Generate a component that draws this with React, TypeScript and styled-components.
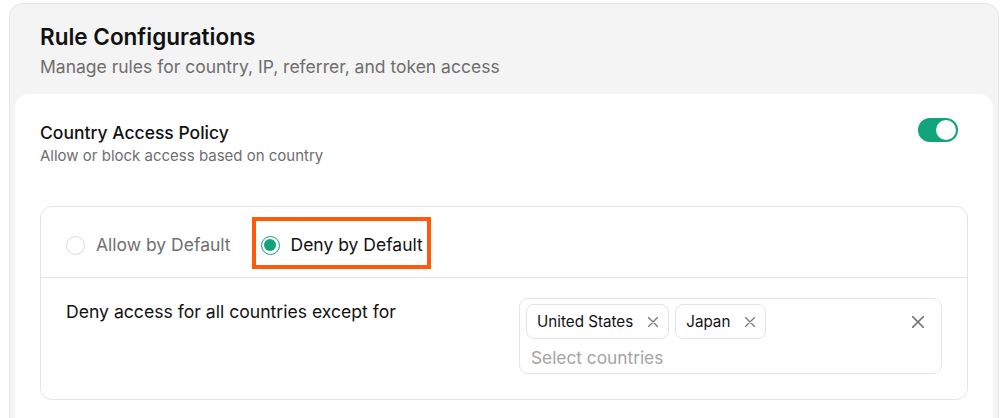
import React, { useState } from 'react';
import styled, { createGlobalStyle } from 'styled-components';

const GlobalStyle = createGlobalStyle`
  body {
    margin: 0;
    background: #ffffff;
    font-family: Inter, "Noto Sans", sans-serif;
    color: #111111;
  }
`;

type Policy = 'allow' | 'deny';

const countries = ['United States', 'Japan'];

// Pequeña X dibujada en svg
const CloseIcon: React.FC<{ size: number }> = ({ size }) => (
  <svg width={size} height={size} viewBox="0 0 10 10" fill="none">
    <path d="M0.5 0.5 L9.5 9.5 M9.5 0.5 L0.5 9.5" stroke="#777" strokeWidth="1.3" strokeLinecap="round" />
  </svg>
);

const App: React.FC = () => {
  const [enabled, setEnabled] = useState(true);
  const [policy, setPolicy] = useState<Policy>('deny');
  const [selected, setSelected] = useState<string[]>(countries);

  return (
    <Page>
      <GlobalStyle />
      <OuterCard>
        <Header>
          <Title>Rule Configurations</Title>
          <Subtitle>Manage rules for country, IP, referrer, and token access</Subtitle>
        </Header>

        <InnerCard>
          <PolicyHeader>
            <div>
              <PolicyTitle>Country Access Policy</PolicyTitle>
              <PolicyDesc>Allow or block access based on country</PolicyDesc>
            </div>
            <Toggle $on={enabled} onClick={() => setEnabled(!enabled)} aria-label="toggle">
              <Knob $on={enabled} />
            </Toggle>
          </PolicyHeader>

          <RuleBox>
            <RadioRow>
              <RadioOption $active={policy === 'allow'} onClick={() => setPolicy('allow')}>
                <RadioCircle $checked={policy === 'allow'} />
                Allow by Default
              </RadioOption>
              <RadioOption $active={policy === 'deny'} $highlight onClick={() => setPolicy('deny')}>
                <RadioCircle $checked={policy === 'deny'} />
                Deny by Default
              </RadioOption>
            </RadioRow>

            <RuleBody>
              <RuleLabel>
                {policy === 'deny'
                  ? 'Deny access for all countries except for'
                  : 'Allow access for all countries except for'}
              </RuleLabel>
              <MultiSelect>
                <ChipRow>
                  {selected.map(c => (
                    <Chip key={c}>
                      {c}
                      <ChipRemove onClick={() => setSelected(selected.filter(s => s !== c))}>
                        <CloseIcon size={10} />
                      </ChipRemove>
                    </Chip>
                  ))}
                  <ClearAll onClick={() => setSelected([])}>
                    <CloseIcon size={12} />
                  </ClearAll>
                </ChipRow>
                <Placeholder>Select countries</Placeholder>
              </MultiSelect>
            </RuleBody>
          </RuleBox>
        </InnerCard>
      </OuterCard>
    </Page>
  );
};

export default App;

const Page = styled.div`
  padding: 3px 6px 0 9px;
`;

const OuterCard = styled.div`
  background: #f4f4f4;
  border: 1px solid #e6e6e6;
  border-bottom: none;
  border-radius: 14px 14px 0 0;
  padding: 5px 5px 0;
`;

const Header = styled.div`
  padding: 14px 25px 15px;
`;

const Title = styled.h2`
  margin: 0;
  font-size: 22.5px;
  line-height: 28px;
  font-weight: 600;
  color: #111;
`;

const Subtitle = styled.p`
  margin: 4px 0 0;
  font-size: 17.5px;
  line-height: 24px;
  color: #6e6e6e;
`;

const InnerCard = styled.div`
  background: #ffffff;
  border-radius: 14px 14px 0 0;
  padding: 27px 25px 30px;
`;

const PolicyHeader = styled.div`
  display: flex;
  justify-content: space-between;
  align-items: flex-start;
`;

const PolicyTitle = styled.div`
  font-size: 17.5px;
  line-height: 24px;
  font-weight: 500;
  color: #111;
`;

const PolicyDesc = styled.div`
  margin-top: 1px;
  font-size: 15px;
  line-height: 20px;
  color: #6e6e6e;
`;

const Toggle = styled.button<{ $on: boolean }>`
  position: relative;
  width: 40px;
  height: 24px;
  margin: -3px 10px 0 0;
  padding: 0;
  border: none;
  border-radius: 12px;
  background: ${({ $on }) => ($on ? '#10a37c' : '#d4d4d4')};
  cursor: pointer;
`;

const Knob = styled.span<{ $on: boolean }>`
  position: absolute;
  top: 2px;
  left: ${({ $on }) => ($on ? '18px' : '2px')};
  width: 20px;
  height: 20px;
  border-radius: 50%;
  background: #fff;
`;

const RuleBox = styled.div`
  margin-top: 40px;
  border: 1px solid #e4e4e4;
  border-radius: 12px;
`;

const RadioRow = styled.div`
  box-sizing: border-box;
  display: flex;
  align-items: center;
  gap: 30px;
  height: 71px;
  padding: 6px 25px 0;
  border-bottom: 1px solid #e4e4e4;
`;

const RadioOption = styled.label<{ $active: boolean; $highlight?: boolean }>`
  position: relative;
  display: flex;
  align-items: center;
  gap: 11px;
  font-size: 17.5px;
  line-height: 24px;
  font-weight: 400;
  color: ${({ $active }) => ($active ? '#111' : '#707070')};
  cursor: pointer;

  ${({ $highlight }) =>
    $highlight &&
    `
    &::after {
      content: '';
      position: absolute;
      top: -16px;
      bottom: -12px;
      left: -9px;
      right: -8px;
      border: 4px solid #ff5a0a;
      pointer-events: none;
    }
  `}
`;

const RadioCircle = styled.span<{ $checked: boolean }>`
  box-sizing: border-box;
  width: 19px;
  height: 19px;
  border-radius: 50%;
  border: 1px solid ${({ $checked }) => ($checked ? '#10a37c' : '#dadada')};
  display: flex;
  align-items: center;
  justify-content: center;
  flex-shrink: 0;

  &::after {
    content: '';
    width: 12px;
    height: 12px;
    border-radius: 50%;
    background: ${({ $checked }) => ($checked ? '#10a37c' : 'transparent')};
  }
`;

const RuleBody = styled.div`
  display: grid;
  grid-template-columns: 1fr 423px;
  padding: 20px 25px 25px;
`;

const RuleLabel = styled.div`
  margin-top: 2px;
  font-size: 17.6px;
  line-height: 24px;
  color: #111;
`;

const MultiSelect = styled.div`
  border: 1px solid #e4e4e4;
  border-radius: 9px;
  padding: 5px 17px 3px 6px;
`;

const ChipRow = styled.div`
  display: flex;
  align-items: center;
  gap: 6px;
`;

const Chip = styled.span`
  display: flex;
  align-items: center;
  gap: 15px;
  height: 33px;
  padding: 0 10px;
  border: 1px solid #e4e4e4;
  border-radius: 8px;
  font-size: 15.2px;
  color: #111;
`;

const ChipRemove = styled.span`
  display: flex;
  cursor: pointer;
`;

const ClearAll = styled.span`
  display: flex;
  margin-left: auto;
  cursor: pointer;
`;

const Placeholder = styled.div`
  margin-top: 7px;
  padding-left: 5px;
  font-size: 17.3px;
  line-height: 24px;
  color: #a3a3a3;
`;
